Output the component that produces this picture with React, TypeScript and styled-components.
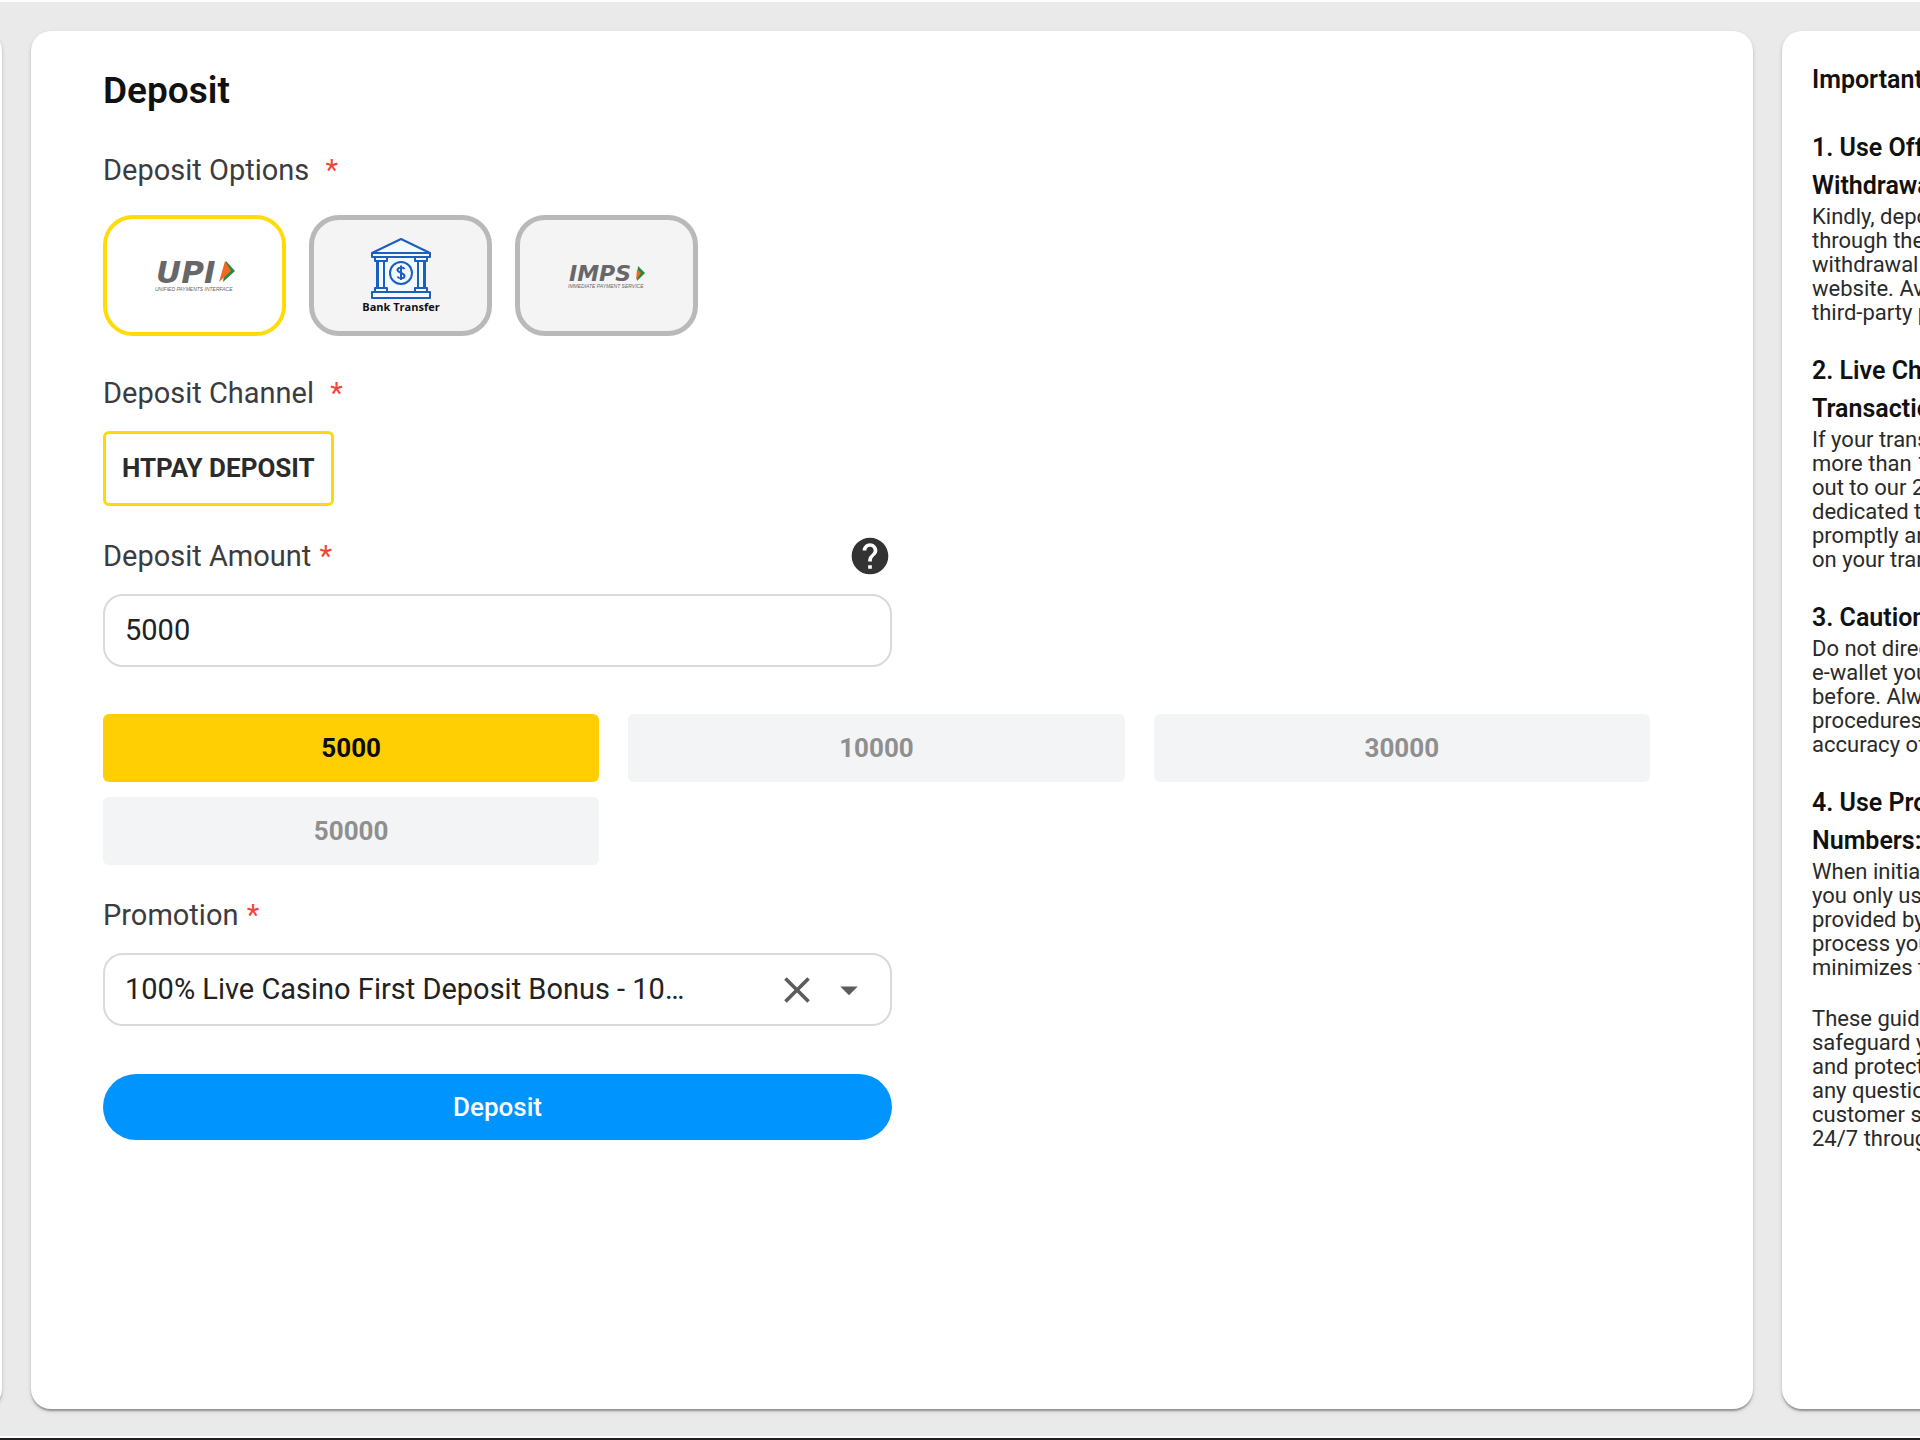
import React, { useState } from 'react';
import styled, { createGlobalStyle, css } from 'styled-components';
import { MdArrowDropDown, MdClose, MdHelp } from 'react-icons/md';

const GlobalStyle = createGlobalStyle`
  *, *::before, *::after { box-sizing: border-box; }
  body {
    margin: 0;
    background: #eaeaea;
    color: #212121;
    font-family: Roboto, "Liberation Sans", sans-serif;
  }
  h1, h2, h3, p { margin: 0; }
  button, input, select { font-family: inherit; }
`;

const Page = styled.div`
  display: flex;
  flex-direction: column;
  min-height: 100vh;
  overflow: hidden;
  border-top: 2px solid #fdfdfd;
`;

const Columns = styled.div`
  flex: 1;
  display: grid;
  grid-template-columns: 2px minmax(0, 1fr) 138px;
  gap: 29px;
  padding: 29px 0 27px;
`;

const Footer = styled.footer`
  height: 4px;
  background: #231f20;
  border-top: 2px solid #fdfdfd;
`;

const card = css`
  background: #fff;
  border-radius: 20px;
  box-shadow:
    0 3px 2px -1px rgba(0, 0, 0, 0.2),
    0 2px 2px rgba(0, 0, 0, 0.14),
    0 2px 5px rgba(0, 0, 0, 0.12);
`;

const MenuCard = styled.nav`
  ${card}
  width: 330px;
  justify-self: end;
`;

const DepositCard = styled.main`
  ${card}
  padding: 38px 103px 38px 72px;
`;

const NotesCard = styled.aside`
  ${card}
  width: 330px;
  padding: 30px;
`;

const Title = styled.h1`
  font-size: 37px;
  line-height: 44px;
  font-weight: 600;
  color: #111;
  margin-bottom: 39px;
`;

const Group = styled.section<{ $gap?: number; $narrow?: boolean }>`
  margin-bottom: ${(p) => p.$gap ?? 32}px;
  ${(p) => p.$narrow && 'max-width: 789px;'}
`;

const LabelRow = styled.div<{ $gap?: number }>`
  display: flex;
  align-items: center;
  justify-content: space-between;
  height: 36px;
  margin-bottom: ${(p) => p.$gap ?? 20}px;
`;

const labelText = css`
  font-size: 29px;
  line-height: 36px;
  font-weight: 400;
  color: #3c3c3f;
`;

const GroupName = styled.h2`
  ${labelText}
`;

const FieldLabel = styled.label`
  ${labelText}
`;

const Required = styled.span<{ $wide?: boolean }>`
  color: #f44336;
  margin-left: ${(p) => (p.$wide ? 9 : 1)}px;
`;

const IconButton = styled.button`
  display: flex;
  flex: none;
  padding: 0;
  border: 0;
  background: none;
  color: #333;
  cursor: pointer;
`;

const Options = styled.div`
  display: flex;
  gap: 23px;
`;

const OptionButton = styled.button<{ $active: boolean }>`
  display: flex;
  align-items: center;
  justify-content: center;
  width: 183px;
  height: 121px;
  padding: 0;
  border-radius: 30px;
  border: ${(p) => (p.$active ? '4px solid #ffdb0a' : '5px solid #b9b9b9')};
  background: ${(p) => (p.$active ? '#fff' : '#f4f4f4')};
  cursor: pointer;
`;

const ChannelButton = styled.button`
  height: 75px;
  padding: 0 16px 2px;
  border: 3px solid #fcd90f;
  border-radius: 6px;
  background: #fff;
  color: #2b2b2b;
  font-size: 26px;
  line-height: 30px;
  font-weight: 700;
  cursor: pointer;
`;

const field = css`
  width: 100%;
  height: 73px;
  border: 2px solid #dadada;
  border-radius: 20px;
  background: #fff;
`;

const fieldText = css`
  color: #222;
  font-size: 29px;
  line-height: 36px;
`;

const AmountInput = styled.input`
  ${field}
  ${fieldText}
  display: block;
  padding: 0 20px 2px;
`;

const Amounts = styled.div`
  display: grid;
  grid-template-columns: repeat(3, minmax(0, 1fr));
  gap: 15px 29px;
  margin-bottom: 32px;
`;

const AmountButton = styled.button<{ $active: boolean }>`
  height: 68px;
  padding: 0;
  border: 0;
  border-radius: 6px;
  background: ${(p) => (p.$active ? '#ffce03' : '#f3f4f6')};
  color: ${(p) => (p.$active ? '#0b0b0b' : '#8f8f8f')};
  font-size: 26px;
  line-height: 30px;
  font-weight: 700;
  cursor: pointer;
`;

const SelectBox = styled.div`
  ${field}
  display: flex;
  align-items: center;
  padding: 0 20px;
  color: #5c5c5c;
`;

const PromotionSelect = styled.select`
  ${fieldText}
  flex: 1;
  min-width: 0;
  padding: 0 0 2px;
  border: 0;
  appearance: none;
  background: none;
`;

const SelectIcons = styled.div`
  display: flex;
  align-items: center;
  gap: 9px;

  ${IconButton} {
    color: #5c5c5c;
  }
`;

const SubmitButton = styled.button`
  display: block;
  width: 100%;
  height: 66px;
  border: 0;
  border-radius: 33px;
  background: #0094ff;
  color: #fff;
  font-size: 26px;
  line-height: 30px;
  font-weight: 500;
  cursor: pointer;
`;

const NoteHeading = styled.h3<{ $gap?: number }>`
  font-size: 25px;
  line-height: 38px;
  font-weight: 600;
  color: #111;
  white-space: pre;
  margin-bottom: ${(p) => p.$gap ?? 0}px;
`;

const NoteText = styled.p`
  font-size: 22px;
  line-height: 24px;
  color: #2a2a2a;
  white-space: pre;
  margin-bottom: 27px;
`;

const LogoWord = styled.text`
  font-family: "DejaVu Sans", sans-serif;
  font-style: italic;
  font-weight: 700;
  fill: #67676a;
`;

const LogoTagline = styled.text`
  font-family: "Liberation Sans", sans-serif;
  font-size: 5px;
  font-style: italic;
  fill: #67676a;
`;

const BankCaption = styled.text`
  font-family: "Open Sans", "Noto Sans", sans-serif;
  font-size: 11px;
  font-weight: 700;
  fill: #111;
`;

function UpiLogo() {
  return (
    <svg width="84" height="60" viewBox="0 0 84 60" role="img" aria-label="UPI">
      <LogoWord x="3" y="37" fontSize="31">UPI</LogoWord>
      <path d="M73 15 L82 25 L70 36 Z" fill="#1f8b46" />
      <path d="M72 15 L78 25 L66 36 Z" fill="#f26a21" />
      <LogoTagline x="2" y="45">UNIFIED PAYMENTS INTERFACE</LogoTagline>
    </svg>
  );
}

function ImpsLogo() {
  return (
    <svg width="84" height="60" viewBox="0 0 84 60" role="img" aria-label="IMPS">
      <LogoWord x="4" y="35" fontSize="22">IMPS</LogoWord>
      <path d="M73 20 L80 27 L72 35 Z" fill="#1f8b46" />
      <path d="M72 23 L76 27 L71 34 Z" fill="#f26a21" />
      <LogoTagline x="3" y="42">IMMEDIATE PAYMENT SERVICE</LogoTagline>
    </svg>
  );
}

function BankLogo() {
  return (
    <svg width="84" height="80" viewBox="0 -1 84 80" role="img" aria-label="Bank Transfer">
      <g fill="#f4f8ff" stroke="#1b5fbf" strokeWidth="2" strokeLinejoin="round">
        <path d="M13 16 L42 2 L71 16 V20 H13 Z" />
        <path d="M14 16 H70" />
        <path d="M18 20 H66 V55 H18 Z" />
        <path d="M16 20 H28 V24 H16 Z M56 20 H68 V24 H56 Z" />
        <path d="M19 24 H25 V51 H19 Z M59 24 H65 V51 H59 Z" />
        <path d="M16 51 H28 V55 H16 Z M56 51 H68 V55 H56 Z" />
        <path d="M13 55 H71 V61 H13 Z" />
        <circle cx="42" cy="36" r="11" />
        <path d="M45.500 32 C44.500 30 38.500 30 38.500 33 C38.500 36 45.500 35.500 45.500 39 C45.500 42 39.500 42 38.500 39.500 M42 28.500 V43" fill="none" />
      </g>
      <BankCaption x="42" y="74" textAnchor="middle">Bank Transfer</BankCaption>
    </svg>
  );
}

const OPTIONS = [
  { id: 'upi', Logo: UpiLogo },
  { id: 'bank', Logo: BankLogo },
  { id: 'imps', Logo: ImpsLogo },
];

const AMOUNTS = ['5000', '10000', '30000', '50000'];

const NOTES = [
  {
    heading: '1. Use Off\nWithdrawa',
    text: 'Kindly, depo\nthrough the\nwithdrawal \nwebsite. Av\nthird-party p',
  },
  {
    heading: '2. Live Ch\nTransactio',
    text: 'If your trans\nmore than 1\nout to our 2\ndedicated t\npromptly an\non your tran',
  },
  {
    heading: '3. Caution',
    text: 'Do not direc\ne-wallet you\nbefore. Alw\nprocedures\naccuracy of',
  },
  {
    heading: '4. Use Pro\nNumbers:',
    text: 'When initia\nyou only us\nprovided by\nprocess you\nminimizes t',
  },
];

const CLOSING =
  'These guide\nsafeguard y\nand protect\nany questio\ncustomer s\n24/7 throug';

export default function App() {
  const [option, setOption] = useState('upi');
  const [amount, setAmount] = useState('5000');
  const [promotion, setPromotion] = useState('live-casino');

  return (
    <Page>
      <GlobalStyle />
      <Columns>
        <MenuCard />
        <DepositCard>
          <Title>Deposit</Title>

          <Group $gap={39}>
            <LabelRow $gap={27}>
              <GroupName>
                Deposit Options <Required $wide>*</Required>
              </GroupName>
            </LabelRow>
            <Options>
              {OPTIONS.map(({ id, Logo }) => (
                <OptionButton
                  key={id}
                  type="button"
                  $active={id === option}
                  aria-pressed={id === option}
                  onClick={() => setOption(id)}
                >
                  <Logo />
                </OptionButton>
              ))}
            </Options>
          </Group>

          <Group>
            <LabelRow>
              <GroupName>
                Deposit Channel <Required $wide>*</Required>
              </GroupName>
            </LabelRow>
            <ChannelButton type="button">HTPAY DEPOSIT</ChannelButton>
          </Group>

          <Group $narrow $gap={47}>
            <LabelRow>
              <FieldLabel htmlFor="amount">
                Deposit Amount <Required>*</Required>
              </FieldLabel>
              <IconButton type="button" aria-label="Help">
                <MdHelp size={44} />
              </IconButton>
            </LabelRow>
            <AmountInput
              id="amount"
              inputMode="numeric"
              value={amount}
              onChange={(e) => setAmount(e.target.value)}
            />
          </Group>

          <Amounts>
            {AMOUNTS.map((value) => (
              <AmountButton
                key={value}
                type="button"
                $active={value === amount}
                onClick={() => setAmount(value)}
              >
                {value}
              </AmountButton>
            ))}
          </Amounts>

          <Group $narrow $gap={48}>
            <LabelRow>
              <FieldLabel htmlFor="promotion">
                Promotion <Required>*</Required>
              </FieldLabel>
            </LabelRow>
            <SelectBox>
              <PromotionSelect
                id="promotion"
                value={promotion}
                onChange={(e) => setPromotion(e.target.value)}
              >
                <option value="" />
                <option value="live-casino">100% Live Casino First Deposit Bonus - 10…</option>
              </PromotionSelect>
              <SelectIcons>
                <IconButton type="button" aria-label="Clear" onClick={() => setPromotion('')}>
                  <MdClose size={44} />
                </IconButton>
                <MdArrowDropDown size={42} />
              </SelectIcons>
            </SelectBox>
          </Group>

          <Group $narrow $gap={0}>
            <SubmitButton type="submit">Deposit</SubmitButton>
          </Group>
        </DepositCard>

        <NotesCard>
          <NoteHeading $gap={30}>Important</NoteHeading>
          {NOTES.map(({ heading, text }) => (
            <React.Fragment key={heading}>
              <NoteHeading>{heading}</NoteHeading>
              <NoteText>{text}</NoteText>
            </React.Fragment>
          ))}
          <NoteText>{CLOSING}</NoteText>
        </NotesCard>
      </Columns>
      <Footer />
    </Page>
  );
}
